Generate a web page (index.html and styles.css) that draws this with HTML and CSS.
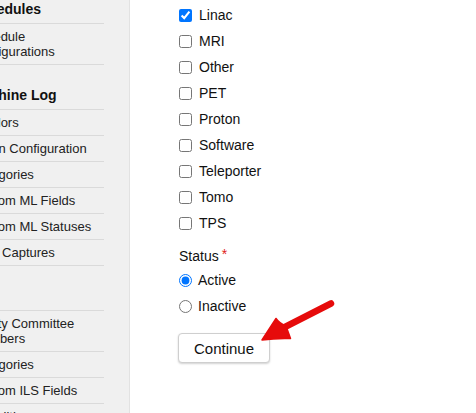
FILE: index.html
```html
<!DOCTYPE html>
<html lang="en">
<head>
<meta charset="utf-8">
<title>Machine Types</title>
<link rel="stylesheet" href="styles.css">
</head>
<body>
<div class="layout">
  <nav class="sidebar">
    <div class="sidebar-inner">
      <div class="nav-head">Schedules</div>
      <a class="nav-item">Schedule Configurations</a>
      <div class="nav-head">Machine Log</div>
      <a class="nav-item">Vendors</a>
      <a class="nav-item">Token Configuration</a>
      <a class="nav-item">Categories</a>
      <a class="nav-item">Custom ML Fields</a>
      <a class="nav-item">Custom ML Statuses</a>
      <a class="nav-item">Data Captures</a>
      <div class="nav-head">ILS</div>
      <a class="nav-item">Safety Committee Members</a>
      <a class="nav-item">Categories</a>
      <a class="nav-item">Custom ILS Fields</a>
      <a class="nav-item">Monolith</a>
    </div>
  </nav>
  <main class="content">
    <form class="form">
      <div class="checks">
        <label class="opt"><input type="checkbox" checked><span>Linac</span></label>
        <label class="opt"><input type="checkbox"><span>MRI</span></label>
        <label class="opt"><input type="checkbox"><span>Other</span></label>
        <label class="opt"><input type="checkbox"><span>PET</span></label>
        <label class="opt"><input type="checkbox"><span>Proton</span></label>
        <label class="opt"><input type="checkbox"><span>Software</span></label>
        <label class="opt"><input type="checkbox"><span>Teleporter</span></label>
        <label class="opt"><input type="checkbox"><span>Tomo</span></label>
        <label class="opt"><input type="checkbox"><span>TPS</span></label>
      </div>
      <div class="field-label">Status<span class="req">*</span></div>
      <div class="radios">
        <label class="opt radio"><input type="radio" name="status" checked><span>Active</span></label>
        <label class="opt radio"><input type="radio" name="status"><span>Inactive</span></label>
      </div>
      <button type="button" class="btn">Continue</button>
    </form>
  </main>
</div>
<svg class="arrow" width="476" height="413" viewBox="0 0 476 413" aria-hidden="true">
  <line x1="281" y1="329" x2="331" y2="303.5" stroke="#e60b0b" stroke-width="6.5" stroke-linecap="round"/>
  <path d="M262 340 L276 318.5 Q279 323 286 326 L290.5 338.5 Q276 338 262 340 Z" fill="#e60b0b" stroke="#e60b0b" stroke-width="1.5" stroke-linejoin="round"/>
</svg>
</body>
</html>
```
FILE: styles.css
```css
html, body {
  margin: 0;
  padding: 0;
  height: 100%;
  overflow: hidden;
  background: #fff;
}

body {
  font-family: "Liberation Sans", Arial, Helvetica, sans-serif;
  color: #111;
  position: relative;
}

.layout {
  display: flex;
  min-height: 100%;
}

.sidebar {
  width: 130px;
  flex: 0 0 130px;
  box-sizing: border-box;
  background: #f0f0f0;
  border-right: 1px solid #e2e2e2;
  overflow: hidden;
}

.sidebar-inner {
  margin-left: -29px;
  margin-top: -21px;
  padding-right: 25px;
}

.nav-head {
  font-weight: bold;
  font-size: 14px;
  line-height: 17px;
  padding: 22px 0 5px 0;
  border-bottom: 1px solid #dadada;
  color: #111;
  white-space: nowrap;
}

.nav-item {
  display: block;
  font-size: 13px;
  line-height: 15px;
  padding: 5px 0;
  border-bottom: 1px solid #dadada;
  color: #222;
  text-decoration: none;
}

.content {
  flex: 1;
  padding: 2px 0 0 49px;
}

.checks, .radios {
  display: flex;
  flex-direction: column;
}

.radios {
  margin-top: 2px;
}

.opt {
  display: flex;
  align-items: center;
  height: 26px;
  font-size: 14px;
  color: #111;
}

.opt input {
  margin: 0 7px 0 0;
  width: 13px;
  height: 13px;
}

.radio input {
  margin-right: 6px;
}

.field-label {
  margin-top: 11px;
  font-size: 14px;
  line-height: 18px;
  color: #111;
}

.req {
  color: #e0201b;
  margin-left: 3px;
  font-size: 14px;
  position: relative;
  top: -2px;
}

.btn {
  margin: 14px 0 0 -1px;
  width: 92px;
  height: 30px;
  font-family: "Liberation Sans", Arial, Helvetica, sans-serif;
  font-size: 15px;
  color: #111;
  background: #fff;
  border: 1px solid #cfcfcf;
  border-radius: 4px;
  box-shadow: 0 1px 2px rgba(0, 0, 0, 0.18);
  padding: 0;
}

.arrow {
  position: absolute;
  left: 0;
  top: 0;
  pointer-events: none;
}
```
